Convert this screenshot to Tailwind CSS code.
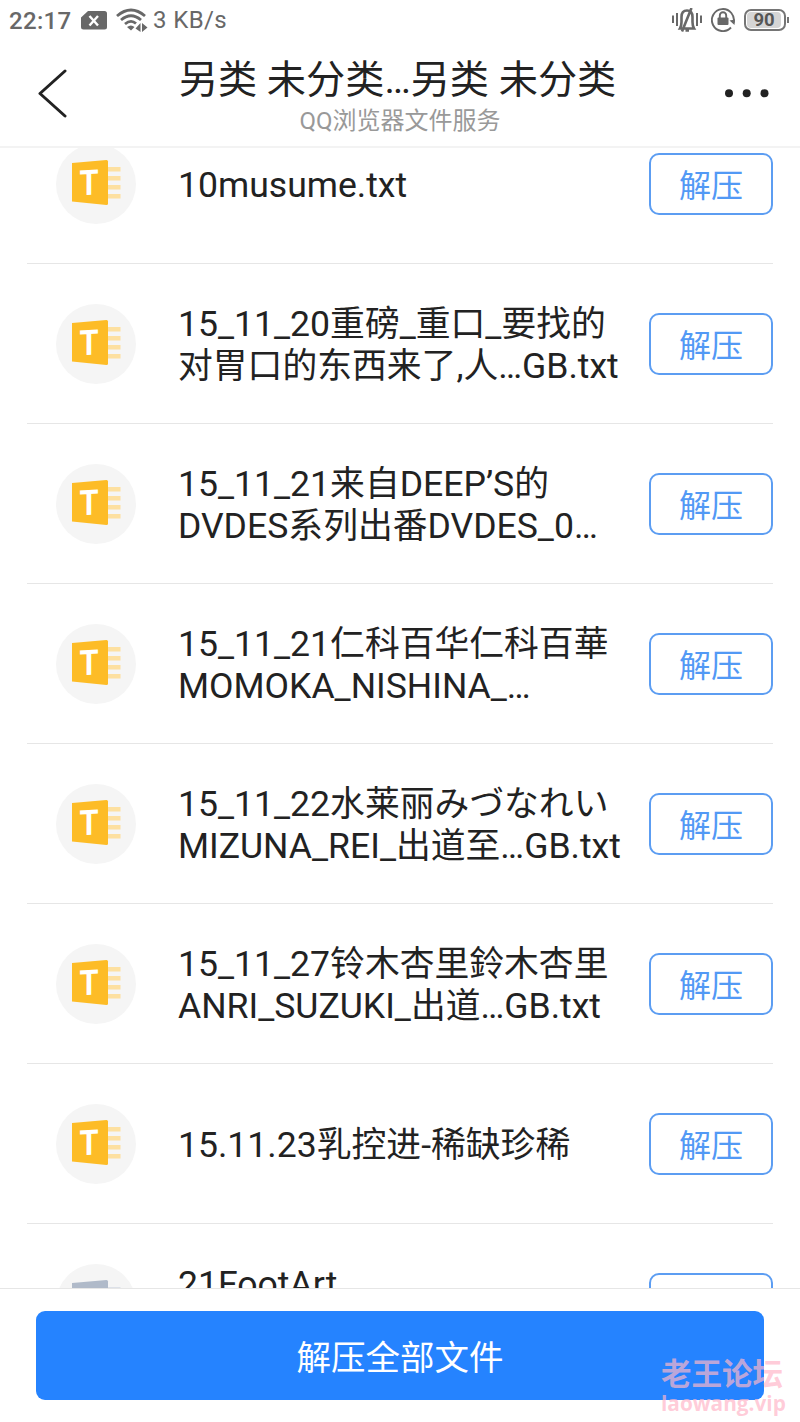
<!DOCTYPE html>
<html lang="zh-CN">
<head>
  <meta charset="UTF-8" />
  <meta name="viewport" content="width=device-width, initial-scale=1.0" />
  <title>QQ浏览器文件服务</title>
  <script src="https://cdn.jsdelivr.net/npm/@tailwindcss/browser@4"></script>
</head>
<body class="bg-white font-[Roboto,'Noto_Sans_CJK_SC',sans-serif] text-[#222]">
  <div class="relative flex h-[1422px] w-[800px] flex-col overflow-hidden">

    <!-- STATUS BAR -->
    <div class="flex h-10 shrink-0 items-center pl-[9px] pr-[11px] text-[#686868]">
      <span class="w-[71px] whitespace-nowrap pt-[2px] text-[24px] font-medium tracking-[0.3px]">22:17</span>
      <svg class="h-5 w-7" viewBox="0 0 28 20">
        <path d="M8 1H24.500Q27 1 27 3.500V17Q27 19.500 24.500 19.500H3.500Q1 19.500 1 17V7.500Z" fill="#686868" />
        <path d="M9.500 6L18 15.500M18 6L9.500 15.500" stroke="#fff" stroke-width="2.400" />
      </svg>
      <svg class="ml-2 h-6 w-[32px]" viewBox="0 0 32 24" fill="none" stroke="#686868" stroke-width="2.800">
        <path d="M1 8Q15 -4 29 8M5 12Q15 3.500 25 12M9 16Q15 11 20 15.500" />
        <path d="M11 19Q15 16 18.500 19L15 22.500Z" fill="#686868" stroke="none" />
        <path d="M24.500 15V24L19.500 20.500ZM26 15V24L31.500 19.500Z" fill="#686868" stroke="none" />
      </svg>
      <span class="ml-[5px] text-[24px] tracking-[0.4px]">3 KB/s</span>
      <div class="ml-auto flex items-center">
        <svg class="h-6 w-[30px]" viewBox="0 0 30 24" fill="none" stroke="#686868" stroke-width="2">
          <path d="M1 7.500V15M5 5V18M25 5V18M29 7.500V15" />
          <path d="M8 20.500Q9.500 18 9.500 14V9Q9.500 2.500 15 2.500Q20.500 2.500 20.500 9V14Q20.500 18 22 20.500ZM19.500 0L10 23.500M13.500 22.500H17" stroke-width="2.600" />
        </svg>
        <svg class="ml-[9px] h-6 w-6" viewBox="0 0 24 24" fill="none" stroke="#686868" stroke-width="1.900">
          <path d="M20 19.500A11 11 0 1 1 22.500 15" />
          <path d="M18.500 12.500L24 11.500L23.500 17Z" fill="#686868" stroke="none" />
          <rect x="6.500" y="9.500" width="11" height="7.500" rx="1" fill="#686868" stroke="none" />
          <path d="M8.800 10V7.500a3.200 3.200 0 0 1 6.400 0V10" />
        </svg>
        <div class="ml-[9px] flex h-[22px] w-[42px] rounded-[7px] border-2 border-[#757575] p-px">
          <div class="flex w-[34px] items-center justify-center rounded-[4px] bg-[#d5d5d5] pt-px text-[18.5px] font-bold leading-none text-[#555]">90</div>
        </div>
        <div class="ml-px h-[6px] w-[2px] bg-[#757575]"></div>
      </div>
    </div>

    <!-- HEADER -->
    <header class="flex h-[108px] shrink-0 items-start justify-between border-b-2 border-[#f3f3f3] pl-[37px] pr-[29px]">
      <svg class="mt-7 h-[50px] w-[30px] shrink-0" viewBox="0 0 30 50" fill="none" stroke="#222" stroke-width="3" stroke-linecap="round" stroke-linejoin="round">
        <path d="M28 3L3 25.500L28 48" />
      </svg>
      <div class="flex flex-col items-center pl-[5px]">
        <h1 class="mt-[15px] whitespace-nowrap text-[39.2px] leading-[50px]">另类 未分类…另类 未分类</h1>
        <p class="mt-[2px] whitespace-nowrap pl-[5px] text-[24px] leading-7 text-[#999]">QQ浏览器文件服务</p>
      </div>
      <svg class="mt-12 h-2.5 w-12 shrink-0" viewBox="0 0 48 10" fill="#222">
        <circle cx="6" cy="5.300" r="4" /><circle cx="23.700" cy="5.300" r="4" /><circle cx="41.500" cy="5.300" r="4" />
      </svg>
    </header>

    <!-- FILE LIST -->
    <main class="h-[1140px] shrink-0 overflow-hidden">
      <ul id="files" class="-mt-11 pl-[27px] pr-[27px]"></ul>
    </main>

    <!-- BOTTOM BUTTON -->
    <footer class="h-[134px] shrink-0 border-t border-[#e6e6e6] px-9 pt-[22px]">
      <button class="flex h-[89px] w-full items-center justify-center rounded-[9px] bg-[#2583ff] pt-[6px] text-[34.5px] text-white">解压全部文件</button>
    </footer>

    <!-- WATERMARK -->
    <div class="absolute left-[661px] top-[1358px] whitespace-nowrap font-bold text-[#ffb6c8]/70">
      <div class="text-[30.5px] leading-[34px]">老王论坛</div>
      <div class="font-['Open_Sans'] text-[20.8px] leading-[22px]">laowang.vip</div>
    </div>
  </div>

  <script>
    const files = [
      { lines: ["10musume.txt"], type: "txt" },
      { lines: ["15_11_20重磅_重口_要找的", "对胃口的东西来了,人…GB.txt"], type: "txt" },
      { lines: ["15_11_21来自DEEP’S的", "DVDES系列出番DVDES_0…"], type: "txt" },
      { lines: ["15_11_21仁科百华仁科百華", "MOMOKA_NISHINA_…"], type: "txt" },
      { lines: ["15_11_22水莱丽みづなれい", "MIZUNA_REI_出道至…GB.txt"], type: "txt" },
      { lines: ["15_11_27铃木杏里鈴木杏里", "ANRI_SUZUKI_出道…GB.txt"], type: "txt" },
      { lines: ["15.11.23乳控进-稀缺珍稀"], type: "txt" },
      { lines: ["21FootArt", ""], type: "other" },
    ];
    const colors = { txt: ["#fdbc26", "#fde0a0"], other: ["#b0bac9", "#dde1e8"] };

    // latin runs are set a little larger than the chinese ones
    const runs = s => s.replace(/[\w.,’…-]+/g, m => `<span class="text-[35.6px]">${m}</span>`);

    document.getElementById("files").innerHTML = files.map(f => `
      <li class="flex h-40 items-center border-b border-[#e6e6e6] pl-[29px]">
        <div class="size-20 shrink-0 rounded-full bg-[#f5f5f5]">
          <svg class="size-20" viewBox="0 0 80 80">
            <path d="M50 23H64.500V27.500H50ZM50 32H64.500V36.500H50ZM50 41H64.500V45.500H50ZM50 50H64.500V54.500H50Z" fill="${colors[f.type][1]}" />
            <path d="M16 19L50.500 16Q52 16 52 17.500V59.500Q52 61 50.500 61L16 57.500Z" fill="${colors[f.type][0]}" />
            <text x="33" y="51" text-anchor="middle" font-size="35" font-weight="700" fill="#fff" font-family="Roboto" transform="translate(33 0) scale(.88 1) skewY(-3) translate(-33 0)">T</text>
          </svg>
        </div>
        <div class="ml-[42px] w-[472px] whitespace-nowrap pt-[2px] text-[34.8px] leading-[42px]">
          ${f.lines.map(l => `<p class="h-[42px]">${runs(l)}</p>`).join("")}
        </div>
        <button class="flex h-[62px] w-[124px] shrink-0 items-center justify-center rounded-[10px] border-2 border-[#5c9df2] pt-1 text-[32px] text-[#5299f5]">解压</button>
      </li>
    `).join("");
  </script>
</body>
</html>
